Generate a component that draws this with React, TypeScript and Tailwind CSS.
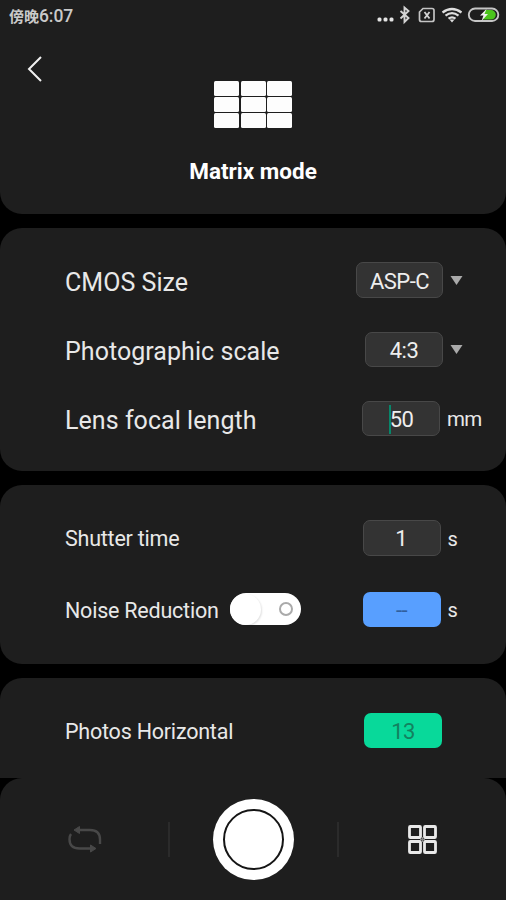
import type { ReactNode } from "react";

function StatusBar() {
  return (
    <div className="flex h-[30px] items-center pl-[9px] pr-[6px] text-[#c9c9c9]">
      <span className="pt-[2px] text-[17.500px] font-medium leading-[28px] tracking-[-0.100px]">
        <span className="text-[15px] font-bold tracking-[0px]">傍晚</span>6:07
      </span>
      <svg className="ml-auto" width="124" height="20" viewBox="0 0 124 20" fill="none">
        <g fill="#e4e4e4">
          <rect x="1.5" y="12.500" width="4" height="4" rx="1.500" />
          <rect x="7.500" y="12.500" width="4" height="4" rx="1.500" />
          <rect x="13.500" y="12.500" width="4" height="4" rx="1.500" />
        </g>
        <path d="M24.500 6l8 7-4 4V2.500l4 3.500-8 7.500" stroke="#d4d4d4" strokeWidth="1.900" />
        <path d="M47 3.500h9q2 0 2 2v9q0 2-2 2H45.500q-2 0-2-2V7z" stroke="#c4c4c4" strokeWidth="1.700" />
        <path d="M48.500 7l5 6.500M53.500 7L48.500 13.500" stroke="#d4d4d4" strokeWidth="1.800" />
        <g stroke="#dedede" strokeWidth="2.200">
          <path d="M66.500 7.500q9.500-7 19 0" />
          <path d="M69.500 10.700q6.500-5 13 0" />
          <path d="M72.500 13.700q3.500-2.800 7 0" />
        </g>
        <path d="M73.500 14.500h5L76 17.500z" fill="#dedede" />
        <path d="M109 5h6a4.800 4.800 0 0 1 0 9.600h-8z" fill="#4bc51c" />
        <rect x="92.800" y="3.500" width="29.500" height="12.500" rx="6.250" stroke="#c6c6c6" strokeWidth="1.900" />
        <path d="M110.500 4l-6.500 6.500h3.500L105.500 16l6.500-7h-3.500z" fill="#f2f2f2" />
      </svg>
    </div>
  );
}

function Row({ label, large = false, children }: { label: string; large?: boolean; children: ReactNode }) {
  return (
    <div className={large ? "flex h-[69.3px] items-center" : "flex h-[71.500px] items-center"}>
      <span
        className={
          large
            ? "pt-[5px] text-[25px] leading-[30px] tracking-[0.050px]"
            : "pt-[3px] text-[21.500px] leading-[26px] tracking-[-0.220px]"
        }
      >
        {label}
      </span>
      {children}
    </div>
  );
}

function Caret() {
  return (
    <svg width="13" height="9" viewBox="0 0 13 9" fill="#aaa" className="ml-[7px] mr-[43px]">
      <path d="M.5 0h12L6.500 9z" />
    </svg>
  );
}

const box =
  "ml-auto flex h-[35.500px] items-center justify-center rounded-[7px] border border-[#484848] bg-[#333] pt-[2px] text-[22px] text-[#eee]";

export default function App() {
  return (
    <main
      className="flex h-[900px] w-[506px] flex-col overflow-hidden bg-black font-[450] text-[#e8e8e8]"
      style={{ fontFamily: 'Roboto, "Noto Sans CJK TC", sans-serif' }}
    >
      <header className="h-[213.500px] shrink-0 rounded-b-[22px] bg-[#1e1e1e]">
        <StatusBar />
        <div className="flex h-[51px] items-start pl-[27px] pt-[26px]">
          <svg width="16" height="26" viewBox="0 0 16 26" fill="none" stroke="#f0f0f0" strokeWidth="2">
            <path d="M14 1L2 13l12 12" />
          </svg>
        </div>
        <div className="mx-auto grid h-[47px] w-[78px] grid-cols-3 grid-rows-3 gap-[1.500px]">
          {Array.from({ length: 9 }, (_, i) => (
            <span key={i} className="rounded-[1.500px] bg-[#fdfdfd]" />
          ))}
        </div>
        <h1 className="mt-[29px] text-center text-[22.500px] font-bold leading-[28px] text-white">Matrix mode</h1>
      </header>

      <section className="mt-[14px] h-[243.500px] shrink-0 rounded-[22px] bg-[#1e1e1e] pl-[65px] pt-[18px]">
        <Row label="CMOS Size" large>
          <div className={`${box} w-[87px] tracking-[-0.500px]`}>ASP-C</div>
          <Caret />
        </Row>
        <Row label="Photographic scale" large>
          <div className={`${box} w-[78px] tracking-[-0.500px]`}>4:3</div>
          <Caret />
        </Row>
        <Row label="Lens focal length" large>
          <div className={`${box} w-[78px] tracking-[-0.500px]`}>
            <span className="-mr-[1px] h-[29px] w-[2px] bg-[#07866a]" />
            50
          </div>
          <span className="ml-[7px] w-[59px] pt-[2px] text-[20.500px] tracking-[-0.700px]">mm</span>
        </Row>
      </section>

      <section className="mt-[14px] h-[179px] shrink-0 rounded-[22px] bg-[#1e1e1e] pl-[65px] pt-[17px]">
        <Row label="Shutter time">
          <div className={`${box} w-[78px]`}>1</div>
          <span className="ml-[7px] w-[58.500px] pt-[2px] text-[20px]">s</span>
        </Row>
        <Row label="Noise Reduction">
          <div className="ml-[11px] flex h-[32px] w-[71px] items-center justify-between rounded-full bg-white pr-[8px]">
            <span className="size-[31px] rounded-full bg-white shadow-[1px_1px_2px_rgba(0,0,0,0.12)]" />
            <span className="size-[14px] rounded-full border-2 border-[#aaa]" />
          </div>
          <div className="ml-auto flex h-[35.500px] w-[78px] items-center justify-center rounded-[7px] bg-[#589fff] pt-[2px] text-[22px] tracking-[-0.500px] text-[#315f9d]">
            --
          </div>
          <span className="ml-[7px] w-[58.500px] pt-[2px] text-[20px]">s</span>
        </Row>
      </section>

      <section className="mt-[14px] h-[100px] shrink-0 rounded-t-[22px] bg-[#1e1e1e] pl-[65px] pt-[16.500px]">
        <Row label="Photos Horizontal">
          <div className="ml-auto mr-[64px] flex h-[35.500px] w-[78px] items-center justify-center rounded-[7px] bg-[#08d99a] pt-[2px] text-[22px] font-normal tracking-[-0.500px] text-[#13815f]">
            13
          </div>
        </Row>
      </section>

      <nav className="flex h-[122px] shrink-0 items-center rounded-t-[22px] bg-[#1e1e1e] pl-[67px]">
        <svg width="35" height="28" viewBox="0 0 35 28" fill="none" stroke="#484848" strokeWidth="2.400">
          <path d="M11 5h12q10 0 10 9.500V19M25 23.500H12.500q-10 0-10-9.500 0-3 1.500-5" />
          <path d="M12.500 1.500v7L7 5zM23.500 20v7l5.500-3.500z" fill="#484848" strokeWidth="1" />
        </svg>
        <span className="ml-[66px] h-[35px] w-[2px] bg-[#2b2b2b]" />
        <button className="ml-[43px] flex size-[81px] items-center justify-center rounded-full bg-white" aria-label="Shutter">
          <span className="size-[61px] rounded-full border-2 border-[#151515]" />
        </button>
        <span className="ml-[43px] h-[35px] w-[2px] bg-[#2b2b2b]" />
        <svg className="ml-[69px]" width="29" height="29" viewBox="0 0 29 29" fill="none" stroke="#e9e9e9" strokeWidth="2.800">
          <rect x="1.500" y="1.500" width="11" height="11" rx="0.800" />
          <rect x="16.500" y="1.500" width="11" height="11" rx="0.800" />
          <rect x="1.500" y="16.500" width="11" height="11" rx="0.800" />
          <rect x="16.500" y="16.500" width="11" height="11" rx="0.800" />
          <path d="M12 14.500h5M14.500 12v5" strokeWidth="1.200" stroke="#888" />
        </svg>
      </nav>
    </main>
  );
}
